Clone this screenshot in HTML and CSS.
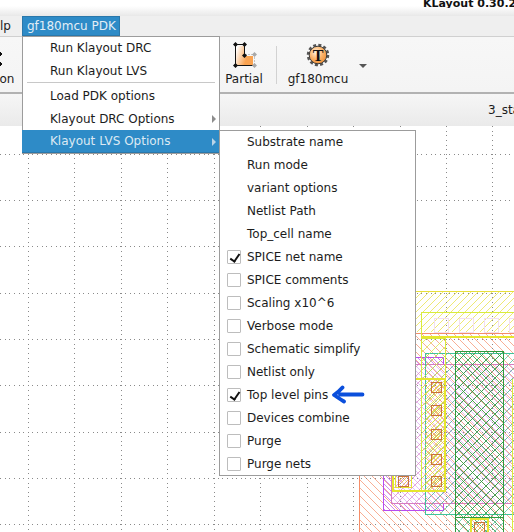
FILE: index.html
```html
<!DOCTYPE html>
<html lang="en">
<head>
<meta charset="utf-8">
<title>KLayout 0.30.2</title>
<link rel="stylesheet" href="styles.css">
</head>
<body>
<div class="app">
  <header class="titlebar"><span class="title-clip"><span class="title">KLayout 0.30.2</span></span></header>
  <nav class="menubar">
    <span class="menubar-item">lp</span>
    <span class="menubar-item active">gf180mcu PDK</span>
  </nav>
  <div class="toolbar">
    <div class="tool tool-on">
      <svg class="tool-icon" width="14" height="30" viewBox="0 0 14 30"><path d="M0 10l2 2-2 2M0 20l2 2-2 2" fill="#111" stroke="#111"/></svg>
      <span>on</span>
    </div>
    <div class="tool tool-partial">
      <svg class="tool-icon" width="38" height="30" viewBox="225 42 38 30">
        <defs><linearGradient id="org" x1="0" x2="1" y1="0.2" y2="0.6"><stop offset="0" stop-color="#fff"/><stop offset="0.7" stop-color="#f9a250"/></linearGradient></defs>
        <path d="M236 46H244V56H253V65H236Z" fill="url(#org)"/>
        <path d="M235.5 44.5V65.5H253M235.5 44.5H244.5V55" fill="none" stroke="#111" stroke-width="1"/>
        <path d="M245 54.5H254.5V65" fill="none" stroke="#c4c4c4" stroke-width="1" stroke-dasharray="2 1"/>
        <g fill="#111"><path d="M235.5 42l2.5 2.5-2.5 2.5-2.5-2.5zM244.5 42l2.5 2.5-2.5 2.5-2.5-2.5zM244.5 53l2.5 2.5-2.5 2.5-2.5-2.5zM235.5 63l2.5 2.5-2.5 2.5-2.5-2.5z"/></g>
        <g fill="#a8a8a8"><path d="M254.5 52l2.5 2.5-2.5 2.5-2.5-2.5zM254.5 63l2.5 2.5-2.5 2.5-2.5-2.5z"/></g>
      </svg>
      <span>Partial</span>
    </div>
    <span class="tool-sep"></span>
    <div class="tool tool-gf">
      <svg class="tool-icon" width="60" height="30" viewBox="288 42 60 30">
        <defs><radialGradient id="gear" cx="0.4" cy="0.35" r="0.7"><stop offset="0" stop-color="#fff3e2"/><stop offset="0.55" stop-color="#fbb268"/><stop offset="1" stop-color="#ef8f36"/></radialGradient></defs>
        <circle cx="318" cy="55" r="10" fill="none" stroke="#555" stroke-width="2.5" stroke-dasharray="3 2.24"/>
        <circle cx="318" cy="55" r="8.8" fill="url(#gear)" stroke="#3a3a3a" stroke-width="1"/>
        <text class="gear-t" x="318" y="60.5" text-anchor="middle">T</text>
      </svg>
      <span>gf180mcu</span>
    </div>
    <span class="tool-arrow"></span>
  </div>
  <div class="tabbar"><span class="tab-label">3_sta</span></div>
  <div class="canvas">
    <svg class="layout" width="514" height="406" viewBox="0 126 514 406" shape-rendering="crispEdges">
      <defs>
        <pattern id="h-yellow" width="7" height="7" patternUnits="userSpaceOnUse"><path d="M0 7L7 0M-1 1L1 -1M6 8L8 6" stroke="#e8e03a" stroke-width="0.7"/></pattern>
        <pattern id="h-yellow-dense" width="5" height="5" patternUnits="userSpaceOnUse"><path d="M0 5L5 0M-1 1L1 -1M4 6L6 4" stroke="#e6e62e" stroke-width="0.7"/></pattern>
        <pattern id="h-salmon" width="8" height="8" patternUnits="userSpaceOnUse"><path d="M0 0L8 8M-1 7L1 9M7 -1L9 1" stroke="#f58d68" stroke-width="0.7"/></pattern>
        <pattern id="h-purple" width="5" height="5" patternUnits="userSpaceOnUse"><path d="M0 0L5 5M-1 4L1 6M4 -1L6 1" stroke="#bb55ee" stroke-width="0.7"/></pattern>
        <pattern id="h-pink" width="9" height="9" patternUnits="userSpaceOnUse"><path d="M0 9L9 0M-1 1L1 -1M8 10L10 8" stroke="#d77cc0" stroke-width="0.7"/></pattern>
        <pattern id="h-teal" width="9" height="9" patternUnits="userSpaceOnUse"><path d="M0 9L9 0M-1 1L1 -1M8 10L10 8" stroke="#3fc49b" stroke-width="0.7"/></pattern>
        <pattern id="h-green" width="9" height="9" patternUnits="userSpaceOnUse"><path d="M0 0L9 9M-1 8L1 10M8 -1L10 1" stroke="#2f9a3e" stroke-width="0.8"/></pattern>
        <pattern id="h-green2" width="9" height="9" patternUnits="userSpaceOnUse"><path d="M0 9L9 0M-1 1L1 -1M8 10L10 8" stroke="#2f9a3e" stroke-width="0.8"/></pattern>
        <pattern id="h-lime" width="9" height="9" patternUnits="userSpaceOnUse"><path d="M0 9L9 0M-1 1L1 -1M8 10L10 8" stroke="#d8e83a" stroke-width="0.7"/></pattern>
        <pattern id="h-contact" width="4" height="4" patternUnits="userSpaceOnUse"><path d="M0 4L4 0" stroke="#e8b13c" stroke-width="0.8"/></pattern>
      </defs>

      <rect x="359.5" y="333" width="160" height="205" fill="url(#h-salmon)"/>
      <path d="M359.5 333V532M359 333H514" fill="none" stroke="#f58d68"/>
      <rect x="416" y="291" width="98" height="41" fill="url(#h-yellow)"/>
      <path d="M416 291.5H514" stroke="#e8e03a" stroke-width="1"/>
      <rect x="434" y="318" width="14" height="14" fill="none" stroke="#f3dff0"/>
      <rect x="459" y="318" width="14" height="14" fill="none" stroke="#f3dff0"/>
      <rect x="484" y="318" width="14" height="14" fill="none" stroke="#f3dff0"/>
      <rect x="509" y="318" width="14" height="14" fill="none" stroke="#f3dff0"/>
      <rect x="421.5" y="312.5" width="100" height="25" fill="none" stroke="#d9ec3c"/>
      <path d="M421 337H514" stroke="#e6e62e" stroke-width="2"/>

      <rect x="383.5" y="357.5" width="60" height="153" fill="url(#h-purple)" stroke="#b84cf0"/>
      <rect x="391.5" y="364.5" width="130" height="139" fill="#fff"/>
      <rect x="391.5" y="364.5" width="130" height="139" fill="url(#h-purple)" opacity="0.55"/>
      <rect x="391.5" y="364.5" width="130" height="139" fill="url(#h-pink)" stroke="#d77cc0"/>
      <rect x="425.5" y="353.5" width="100" height="161" fill="url(#h-teal)" stroke="#3fc49b"/>
      <rect x="425" y="364" width="100" height="140" fill="url(#h-salmon)"/>
      <rect x="421.5" y="338.5" width="24" height="152" fill="url(#h-lime)" stroke="#d9ec3c"/>
      <rect x="455" y="351" width="48" height="166" fill="url(#h-green2)"/>
      <rect x="455.5" y="351.5" width="48" height="166" fill="url(#h-green)" stroke="#2f9a3e"/>
      <rect x="455.5" y="517.5" width="48" height="20" fill="url(#h-teal)"/>
      <rect x="455.5" y="517.5" width="48" height="20" fill="url(#h-green)" stroke="#2f9a3e"/>
      <rect x="425" y="380" width="20" height="110" fill="url(#h-yellow-dense)"/>
      <rect x="393" y="379" width="52" height="112" fill="none" stroke="#e6e62e" stroke-width="2"/>
      <path d="M512 379V532" stroke="#d9ec3c"/>
      <g fill="url(#h-contact)" stroke="#c9723c">
        <rect x="431.5" y="382.5" width="10" height="10"/>
        <rect x="431.5" y="405.5" width="10" height="10"/>
        <rect x="431.5" y="429.5" width="10" height="10"/>
        <rect x="431.5" y="454.5" width="10" height="10"/>
        <rect x="431.5" y="476.5" width="10" height="10"/>
        <rect x="398.5" y="476.5" width="10" height="10"/>
        <rect x="474.5" y="522.5" width="10" height="12"/>
      </g>
      <rect x="395.5" y="475.5" width="16" height="12" fill="none" stroke="#e6e62e"/>
      <rect x="470.5" y="518.5" width="17" height="20" fill="none" stroke="#e6e62e" stroke-width="2"/>

      <g class="grid">
        <path d="M0 154H514M0 200.3H514M0 246.6H514M0 293H514M0 339.2H514M0 385.6H514M0 432H514M0 478.3H514M0 524.6H514"/>
        <path d="M28 126V532M74.5 126V532M121 126V532M167.5 126V532M214 126V532M260.5 126V532M307 126V532M353.5 126V532M400 126V532M446 126V532M492 126V532"/>
      </g>
    </svg>
  </div>

  <div class="menu menu-main">
    <div class="menu-list">
      <div class="menu-row">Run Klayout DRC</div>
      <div class="menu-row">Run Klayout LVS</div>
      <div class="menu-sep"></div>
      <div class="menu-row">Load PDK options</div>
      <div class="menu-row has-sub">Klayout DRC Options</div>
      <div class="menu-row has-sub selected">Klayout LVS Options</div>
    </div>
  </div>

  <div class="menu menu-sub">
    <div class="menu-list">
      <div class="menu-row">Substrate name</div>
      <div class="menu-row">Run mode</div>
      <div class="menu-row">variant options</div>
      <div class="menu-row">Netlist Path</div>
      <div class="menu-row">Top_cell name</div>
      <div class="menu-row"><span class="check on"></span>SPICE net name</div>
      <div class="menu-row"><span class="check"></span>SPICE comments</div>
      <div class="menu-row"><span class="check"></span>Scaling x10^6</div>
      <div class="menu-row"><span class="check"></span>Verbose mode</div>
      <div class="menu-row"><span class="check"></span>Schematic simplify</div>
      <div class="menu-row"><span class="check"></span>Netlist only</div>
      <div class="menu-row"><span class="check on"></span>Top level pins</div>
      <div class="menu-row"><span class="check"></span>Devices combine</div>
      <div class="menu-row"><span class="check"></span>Purge</div>
      <div class="menu-row"><span class="check"></span>Purge nets</div>
    </div>
  </div>

  <svg class="pointer" width="36" height="20" viewBox="330 385 36 20">
    <path d="M340 394.5H362.5M342.5 387.5C339.5 391 337 393 334 395C337 397 340.5 399.5 344 401.5" fill="none" stroke="#0b4fdc" stroke-width="3.8" stroke-linecap="round" stroke-linejoin="round"/>
  </svg>
</div>
</body>
</html>
```
FILE: styles.css
```css
* { box-sizing: border-box; }
html, body { margin: 0; padding: 0; background: #fff; }
body { width: 514px; height: 532px; overflow: hidden; font-family: "DejaVu Sans", sans-serif; font-size: 12px; color: #1c1c1c; }

.app { position: relative; width: 514px; height: 532px; display: flex; flex-direction: column; overflow: hidden; }

.titlebar { flex: 0 0 16px; padding-left: 423px; background: linear-gradient(#fff 0, #fff 6px, #e8e8e8 16px); }
.title-clip { display: flex; align-items: flex-end; height: 8px; overflow: hidden; white-space: nowrap; }
.title { font-weight: 700; font-size: 11px; line-height: 14px; color: #111; margin-bottom: -3px; }

.menubar { flex: 0 0 20px; display: flex; background: #efefef; }
.menubar-item { display: flex; align-items: center; height: 20px; padding: 0 5px; white-space: nowrap; }
.menubar-item:first-child { width: 22px; padding: 0; }
.menubar-item.active { width: 98px; background: #2e8bc7; border: 1px solid #2a78ab; padding: 0 4px 0 4px; color: #e3eef6; }

.toolbar { flex: 0 0 58px; display: flex; align-items: flex-start; background: linear-gradient(#f7f7f7, #f4f4f4); border-top: 1px solid #d0d0d0; border-bottom: 2px solid #b2b2b2; }
.tool { display: flex; flex-direction: column; align-items: center; padding-top: 5px; }
.tool-icon { display: block; flex: none; }
.tool > span { line-height: 14px; white-space: nowrap; }
.tool-on { width: 14px; }
.tool-partial { margin-left: 211px; width: 38px; }
.tool-sep { width: 1px; height: 38px; margin: 9px 0 0 13px; background: #d2d2d2; }
.tool-gf { margin-left: 11px; width: 60px; }
.tool-arrow { margin: 27px 0 0 11px; border: 4px solid transparent; border-top: 4px solid #555; }
.gear-t { font-family: "Liberation Serif", serif; font-weight: 700; font-size: 16px; fill: #111; }

.tabbar { flex: 0 0 32px; display: flex; align-items: center; padding-left: 488px; white-space: nowrap; background: linear-gradient(#f6f6f6, #eaeaea); overflow: hidden; }
.tab-label { line-height: 14px; }

.canvas { flex: 1 1 auto; background: #fff; overflow: hidden; }
.layout { display: block; }
.grid path { fill: none; stroke: #8a8a8a; stroke-width: 1; stroke-dasharray: 1 3.63; }

.menu { position: absolute; background: #fff; border: 1px solid #9c9c9c; }
.menu-main { left: 22px; top: 36px; width: 198px; height: 118px; }
.menu-sub { left: 219px; top: 130px; width: 197px; height: 346px; }
.menu-list { margin-top: -1px; }
.menu-row { position: relative; display: flex; align-items: center; height: 23px; padding-left: 27px; white-space: nowrap; }
.menu-sep { height: 2px; margin: 0 4px; border-top: 1px solid #c8c8c8; }
.menu-row.selected { margin: 0 -1px; padding-left: 28px; background: #2e8bc7; border-bottom: 1px solid #2a78ab; color: #dce9f3; }
.has-sub::after { content: ""; position: absolute; right: 3px; top: 8px; border: 4px solid transparent; border-left: 4px solid #8d8d8d; border-right-width: 0; }
.has-sub.selected::after { right: 4px; border-left-color: #b9d4e8; }

.check { position: absolute; left: 7px; top: 5px; width: 14px; height: 14px; background: #fff; border: 1px solid #bdbdbd; border-radius: 1px; }
.check.on::after { content: ""; position: absolute; left: 4px; top: 1px; width: 4px; height: 8px; border: solid #111; border-width: 0 2px 2px 0; transform: rotate(35deg); }

.pointer { position: absolute; left: 330px; top: 385px; }
```
